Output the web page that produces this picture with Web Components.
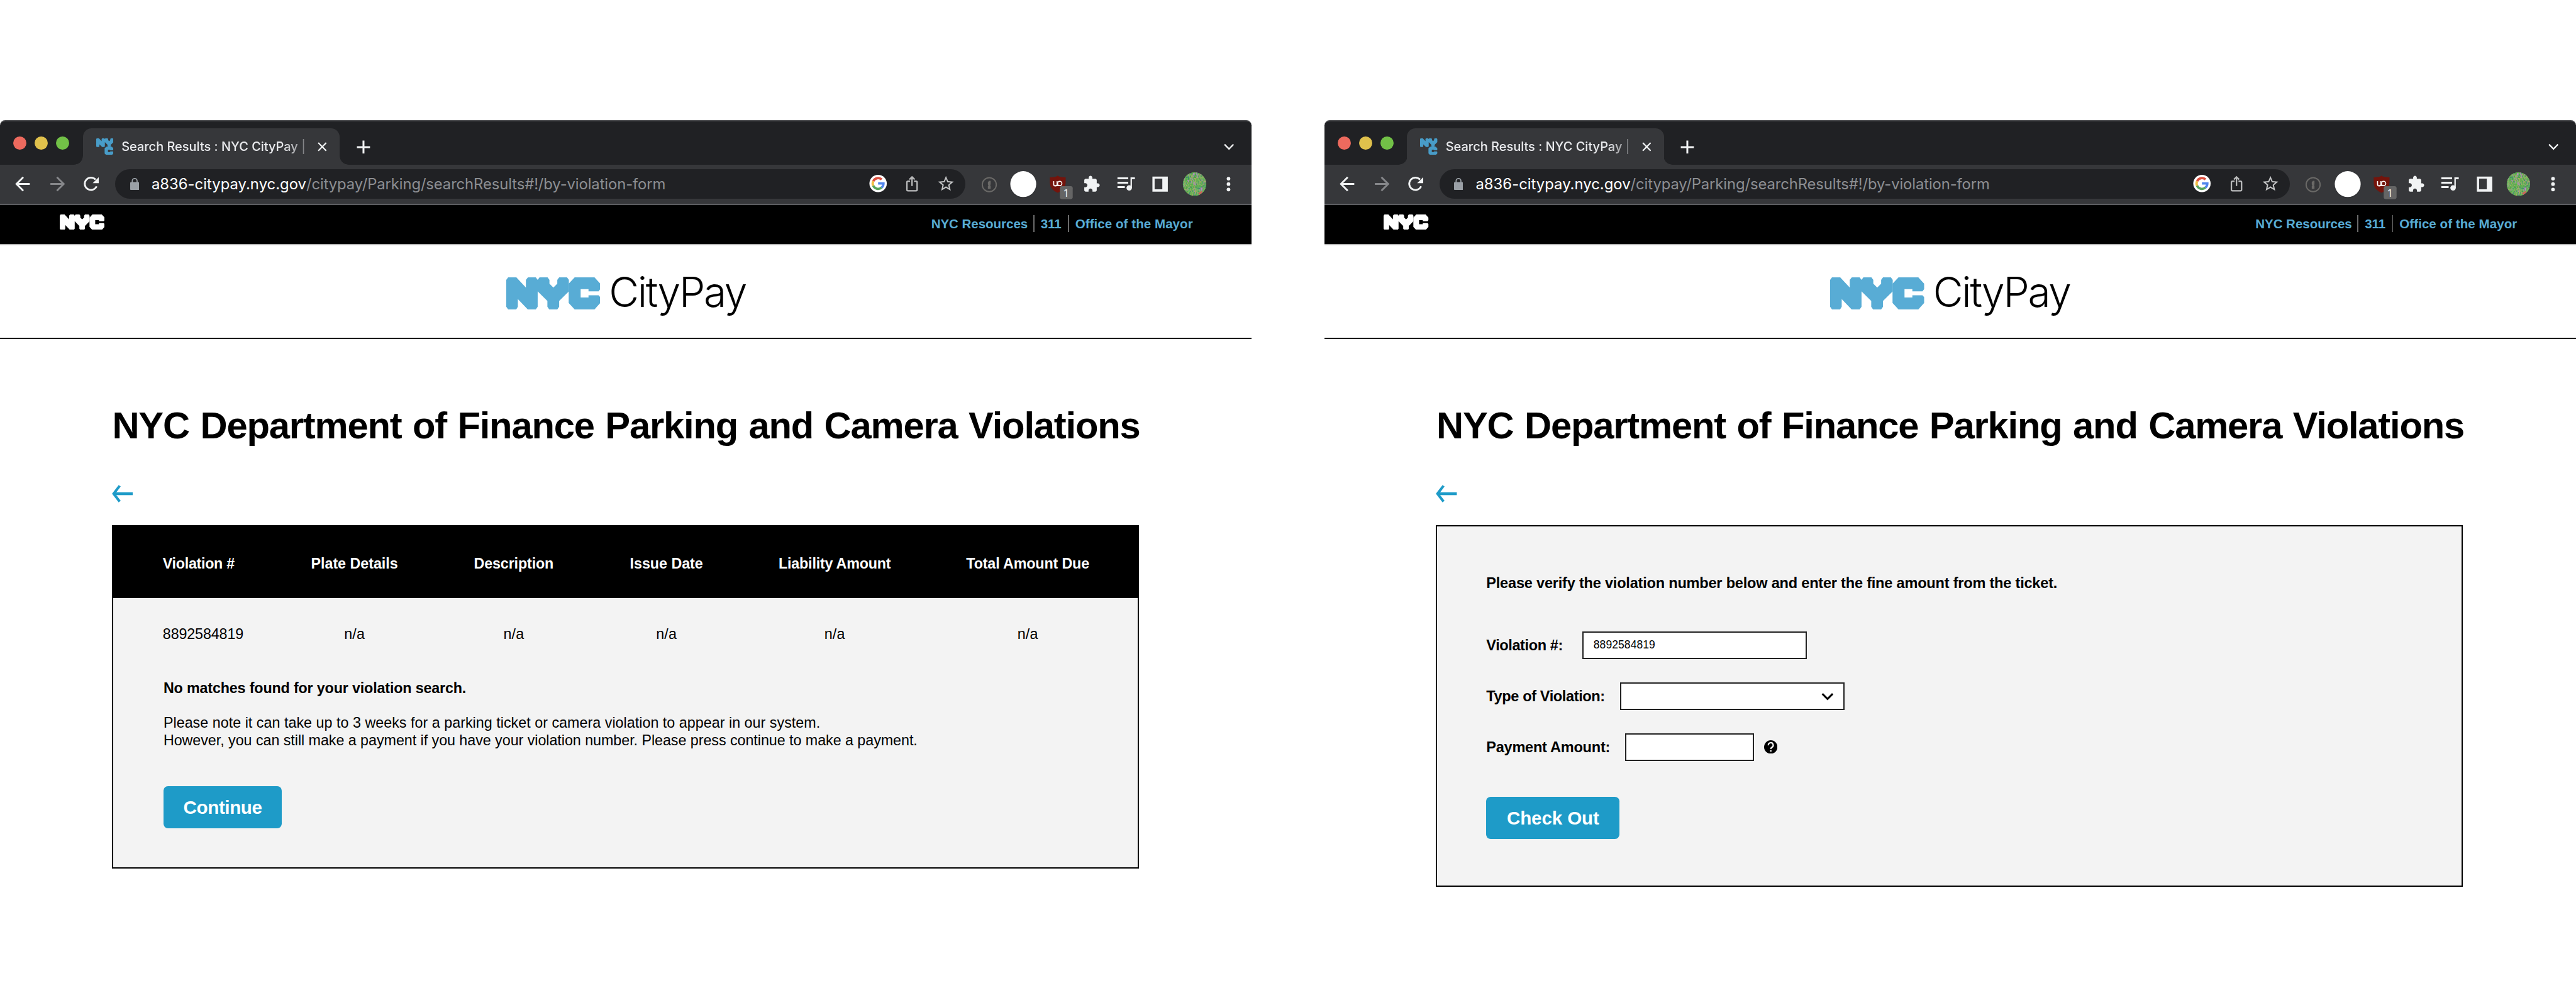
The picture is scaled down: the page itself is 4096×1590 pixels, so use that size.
<!DOCTYPE html>
<html lang="en">
<head>
<meta charset="utf-8">
<title>NYC CityPay</title>
<style>
  /* 1rem stands for 100 design units; the canvas is 74.72rem wide */
  html { font-size: calc(100vw / 74.72); }
  body { margin: 0; background: #fff; color: #000; font-family: "Liberation Sans", Arial, sans-serif; overflow: hidden; }
  citypay-board { height: 29rem; }
</style>
</head>
<body>
<citypay-board>
  <browser-window>
    <city-page heading="NYC Department of Finance Parking and Camera Violations">
      <results-panel></results-panel>
    </city-page>
  </browser-window>
  <browser-window>
    <city-page heading="NYC Department of Finance Parking and Camera Violations">
      <verify-panel></verify-panel>
    </city-page>
  </browser-window>
</citypay-board>

<script>
const NY = 'M128 155L138 133H182L233 221V155L244 133H286L296 155L306 133H349L359 155V188L380 221L401 188V155L411 133H453L463 155V255L411 338V388L401 411H358L348 388V338L296 255V388L286 411H243L190 321V388L181 411H138L128 388Z';
const C = 'M462 188L494 133H600L631 188V235L622 255H568V235H526V308H568V288H622L631 305V355L600 411H494L462 355Z';

function component(name, render) {
  customElements.define(name, class extends HTMLElement {
    connectedCallback() {
      if (this.shadowRoot) return;
      this.attachShadow({ mode: 'open' }).innerHTML = render(this);
    }
  });
}

function speckles() {
  const colors = ['#4f9a4a', '#7fbf5a', '#3f8f7a', '#9fb06a', '#5fc463', '#c9a86a', '#2f7f6f', '#8fae7a', '#57b04c', '#b98ac0', '#74b84e', '#6aa858'];
  let seed = 11, out = '';
  const rnd = () => (seed = (seed * 16807) % 2147483647) / 2147483647;
  for (let y = 22; y < 90; y += 4)
    for (let x = 14; x < 84; x += 3)
      out += `<rect x="${x}" y="${y + rnd() * 2}" width="3" height="${3 + rnd() * 3}" fill="${colors[Math.floor(rnd() * colors.length)]}" opacity=".7"/>`;
  return out;
}

const ICONS = {
  back: '<path d="M70 55.7H32M51 36L31.5 55.7L51 75.4" fill="none" stroke="#f1f3f4" stroke-width="5.4"/>',
  forward: '<path d="M29.4 55.7H67M48.4 36L68 55.7L48.4 75.4" fill="none" stroke="#86878a" stroke-width="5.4"/>',
  reload: '<path d="M65 62.5A18 18 0 1 1 62 43" fill="none" stroke="#f1f3f4" stroke-width="5.2"/><path d="M71.2 36V53.2H53.6Z" fill="#f1f3f4"/>',
  google: '<circle cx="49.7" cy="56" r="25.2" fill="#fff"/><g fill="none" stroke-width="7"><path d="M60.2 44.3A15.7 15.7 0 0 0 35.5 49.4" stroke="#dc5140"/><path d="M35.5 49.4A15.7 15.7 0 0 0 35.5 62.6" stroke="#f2bd42"/><path d="M35.5 62.6A15.7 15.7 0 0 0 59.8 68" stroke="#58a55c"/><path d="M59.8 68A15.7 15.7 0 0 0 65.2 56H49.7" stroke="#5186ec"/></g>',
  share: '<path d="M44 49.5H38Q34.8 49.5 34.8 52.5V74.3Q34.8 77.2 38 77.2H61.2Q64.3 77.2 64.3 74.3V52.5Q64.3 49.5 61.2 49.5H55.3M49.6 63.5V37.5M42 44.5L49.6 37L57.2 44.5" fill="none" stroke="#b9babb" stroke-width="4.2"/>',
  star: '<path transform="translate(22.4 29.7) scale(2.26)" fill="#c4c5c6" d="M22 9.24l-7.19-.62L12 2 9.19 8.63 2 9.24l5.46 4.73L5.82 21 12 17.27 18.18 21l-1.63-7.03L22 9.24zM12 15.4l-3.76 2.27 1-4.28-3.32-2.88 4.38-.38L12 6.1l1.71 4.04 4.38.38-3.32 2.88 1 4.28L12 15.4z"/>',
  key: '<circle cx="49.3" cy="57.7" r="20.3" fill="none" stroke="#6a6967" stroke-width="3.6"/><path d="M45.3 50L49 46.5H53.2V57L51.5 59L53.2 61V70H45.3V62L47 60L45.3 57Z" fill="#6a6967"/>',
  blank: '<circle cx="49.3" cy="58.5" r="38.5" fill="#2a2b2e" opacity=".55"/><circle cx="49.3" cy="56" r="37.6" fill="#fff"/>',
  shield: '<path d="M48.9 31.3Q54 36 72 36.6V52Q72 72 48.9 81Q26.2 72 26.2 52V36.6Q44 36 48.9 31.3Z" fill="#74140c"/><path d="M37.3 47.5V56.5A4.9 4.9 0 0 0 47.1 56.5V47.5M52.3 60.5H42" fill="none" stroke="#fff" stroke-width="3"/><circle cx="54.8" cy="54.2" r="6.3" fill="none" stroke="#fff" stroke-width="3"/><rect x="55.2" y="62" width="37.3" height="37.7" rx="6" fill="#656565"/><text x="72.5" y="92.8" font-family="Inter, sans-serif" font-size="29" text-anchor="middle" fill="#f1f1f1">1</text>',
  puzzle: '<path transform="translate(23.2 29.9) scale(2.13 2.18)" fill="#f1f3f4" d="M20.5 11H19V7c0-1.1-.9-2-2-2h-4V3.5C13 2.12 11.88 1 10.5 1S8 2.12 8 3.5V5H4c-1.1 0-1.99.9-1.99 2v3.8H3.5c1.49 0 2.7 1.21 2.7 2.7s-1.21 2.7-2.7 2.7H2V20c0 1.1.9 2 2 2h3.8v-1.5c0-1.49 1.21-2.7 2.7-2.7 1.49 0 2.7 1.21 2.7 2.7V22H17c1.1 0 2-.9 2-2v-4h1.5c1.38 0 2.5-1.12 2.5-2.5S21.88 11 20.5 11z"/>',
  playlist: '<path d="M23.4 39.4H54.7M23.4 52H54.7M23.4 64.6H44.7" stroke="#f1f3f4" stroke-width="5.4"/><path d="M61.3 67V36.7H74V42H65.4V67Z" fill="#f1f3f4"/><circle cx="57.5" cy="67" r="7.9" fill="#f1f3f4"/>',
  panel: '<path fill-rule="evenodd" d="M26.3 34.3H71V78H26.3ZM32.7 40.3V71.3H55V40.3Z" fill="#f1f3f4"/>',
  avatar: '<clipPath id="c"><circle cx="48.3" cy="56" r="34"/></clipPath><g clip-path="url(#c)"><path d="M10 20H90V92H10Z" fill="#66ad57"/>' + speckles() + '<path d="M66 66h5v9h-4zM44 24h4v6h-4z" fill="#b983c9"/><path d="M59 82l10-6 2 4-8 8z" fill="#d0605a"/></g>',
  dots: '<g fill="#f1f3f4"><circle cx="48.2" cy="40.3" r="5.3"/><circle cx="48.2" cy="56" r="5.3"/><circle cx="48.2" cy="71.7" r="5.3"/></g>'
};

component('tool-icon', el => `
  <style>:host{display:block;flex:none;width:.994rem;height:1.12rem}svg{display:block;width:100%;height:100%}</style>
  <svg viewBox="0 0 99.4 112" preserveAspectRatio="none">${ICONS[el.getAttribute('name')]}</svg>`);

component('nyc-logo', el => `
  <style>:host{display:block;flex:none}svg{display:block;width:100%;height:100%;fill:currentColor}</style>
  ${el.hasAttribute('stacked')
    ? `<svg viewBox="0 0 150 146" preserveAspectRatio="none"><path transform="scale(.4478 .2734) translate(-128 -133)" d="${NY}"/><path transform="translate(73 72) scale(.4556 .2662) translate(-462 -133)" d="${C}"/></svg>`
    : `<svg viewBox="128 133 503 278" preserveAspectRatio="none"><path d="${NY}"/><path d="${C}"/></svg>`}`);

component('citypay-board', () => `
  <style>:host{display:flex;justify-content:space-between;align-items:flex-start;box-sizing:border-box;padding-top:3.48rem}</style>
  <slot></slot>`);

component('browser-window', () => `
  <style>
    :host{display:block;width:36.31rem;flex:none}
    .tabs{height:1.3rem;box-sizing:border-box;background:#202124;border-top:.037rem solid #4b4c4f;border-radius:.15rem .15rem 0 0;display:flex;align-items:flex-end;font-family:Inter,sans-serif}
    .lights{display:flex;gap:.24rem;padding-left:.387rem;align-self:flex-start;margin-top:.445rem}
    .lights i{width:.38rem;height:.38rem;border-radius:50%}
    .foot{width:.25rem;height:.25rem;flex:none;background:radial-gradient(circle at 0 0,#202124 .245rem,#36373a .255rem)}
    .foot.r{background:radial-gradient(circle at 100% 0,#202124 .245rem,#36373a .255rem)}
    .foot.l{margin-left:.147rem}
    .tab{width:7.45rem;height:1.06rem;box-sizing:border-box;background:#36373a;border-radius:.25rem .25rem 0 0;display:flex;align-items:center;padding:.02rem .37rem 0 .38rem}
    nyc-logo{width:.5rem;height:.486rem;color:#489cc8;margin-bottom:.02rem}
    .title{display:flex;margin-left:.24rem;font-size:.365rem;font-weight:500;line-height:.6rem;color:#e9eaed;white-space:pre;-webkit-mask:linear-gradient(90deg,#000 4.7rem,rgba(0,0,0,.42) 5.3rem)}
    .bar{margin-left:.1rem;width:.14rem;font-weight:400}
    .x{margin-left:auto;width:.27rem;height:.27rem}
    .plus{width:.4rem;height:.4rem;margin:0 0 .32rem .235rem}
    .down{width:.3rem;height:.2rem;margin:0 .51rem .42rem auto}
    svg{display:block;fill:none;stroke:#f1f3f4}
    .tool{height:1.16rem;box-sizing:border-box;background:#36373a;border-bottom:.037rem solid #5d5e61;display:flex;padding:0 .163rem 0 .173rem}
    .omni{flex:1;display:flex;align-items:center;height:.86rem;margin:.13rem .19rem 0 .185rem;border-radius:.43rem;background:#202124;padding:0 .06rem 0 .43rem;font:.435rem/.86rem Inter,sans-serif}
    .lock{width:.26rem;height:.35rem}
    .host{color:#fff;margin-left:.365rem}
    .path{color:#8c8e92;margin-right:auto}
    .omni tool-icon{margin-top:-.02rem}
  </style>
  <div class="tabs">
    <div class="lights"><i style="background:#ed6a5e"></i><i style="background:#e0c14c"></i><i style="background:#72c147"></i></div>
    <div class="foot l"></div>
    <div class="tab">
      <nyc-logo stacked></nyc-logo>
      <div class="title"><fit-text w="512">Search Results : NYC CityPay</fit-text><span class="bar">|</span></div>
      <svg class="x" viewBox="0 0 27 27" stroke-width="4"><path d="M2 2L25 25M25 2L2 25"/></svg>
    </div>
    <div class="foot r"></div>
    <svg class="plus" viewBox="0 0 40 40" stroke-width="5.5"><path d="M20 1V39M1 20H39"/></svg>
    <svg class="down" viewBox="0 0 30 20" stroke-width="4.2"><path d="M2 3L15 16L28 3"/></svg>
  </div>
  <div class="tool">
    <tool-icon name="back"></tool-icon><tool-icon name="forward"></tool-icon><tool-icon name="reload"></tool-icon>
    <div class="omni">
      <svg class="lock" viewBox="0 0 26 35" stroke="none"><rect y="12" width="26" height="23" rx="2.5" style="fill:#9aa0a6;stroke:none"/><path d="M6 13V8.5A7 7 0 0 1 20 8.5V13" style="stroke:#9aa0a6;stroke-width:3.2"/></svg>
      <fit-text class="host" w="449">a836-citypay.nyc.gov</fit-text><fit-text class="path" w="1042">/citypay/Parking/searchResults#!/by-violation-form</fit-text>
      <tool-icon name="google"></tool-icon><tool-icon name="share"></tool-icon><tool-icon name="star"></tool-icon>
    </div>
    <tool-icon name="key"></tool-icon><tool-icon name="blank"></tool-icon><tool-icon name="shield"></tool-icon><tool-icon name="puzzle"></tool-icon><tool-icon name="playlist"></tool-icon><tool-icon name="panel"></tool-icon><tool-icon name="avatar"></tool-icon><tool-icon name="dots"></tool-icon>
  </div>
  <slot></slot>`);

component('city-page', el => `
  <style>
    :host{display:block}
    .top{height:1.17rem;box-sizing:border-box;background:#000;border-bottom:.037rem solid #b4b4b4;display:flex;align-items:center;justify-content:space-between;padding:0 1.71rem 0 1.73rem}
    .top nyc-logo{width:1.3rem;height:.45rem;color:#fff;margin-bottom:.13rem}
    .links{display:flex;align-items:center;color:#58acd5;font-weight:700;font-size:.375rem;line-height:.5rem;margin-bottom:.05rem}
    .links i{width:.03rem;height:.5rem;background:#6b6b6b;margin:0 .185rem 0 .19rem}
    .links i.first{margin-left:.16rem}
    .brand{height:2.72rem;box-sizing:border-box;border-bottom:.037rem solid #1a1a1a;display:flex;justify-content:center;align-items:center;gap:.26rem}
    .brand nyc-logo{width:2.727rem;height:.93rem;color:#58acd5;margin-top:.11rem}
    .name{font:300 1.2rem/1.4rem Inter,"Liberation Sans",sans-serif;margin-top:.04rem}
    main{padding:1.92rem 3.28rem 0 3.245rem}
    h1{margin:0;font-size:1.09rem;line-height:1.2rem;font-weight:700;padding-left:.01rem;word-spacing:.035em}
    .back{display:block;width:.61rem;height:.51rem;margin:1.12rem 0 .66rem;fill:none;stroke:#1e9bc8}
  </style>
  <div class="top">
    <nyc-logo></nyc-logo>
    <nav class="links"><fit-text w="280">NYC Resources</fit-text><i class="first"></i><fit-text w="60">311</fit-text><i></i><fit-text w="341">Office of the Mayor</fit-text></nav>
  </div>
  <div class="brand"><nyc-logo></nyc-logo><fit-text class="name" w="397">CityPay</fit-text></div>
  <main>
    <h1><fit-text w="2981">${el.getAttribute('heading')}</fit-text></h1>
    <svg class="back" viewBox="0 0 61 51"><path d="M61 25.5H6" stroke-width="8.5"/><path d="M22.5 2.5L5 25.5L22.5 48.5" stroke-width="7.5"/></svg>
    <slot></slot>
  </main>`);

component('city-button', () => `
  <style>:host{display:inline-flex;align-items:center;justify-content:center;box-sizing:border-box;height:1.22rem;border-radius:.13rem;background:#1e9bc8;color:#fff;font-weight:700;font-size:.54rem;line-height:.7rem;padding-top:.02rem}</style>
  <slot></slot>`);

const HEAD = [['Violation #', 208], ['Plate Details', 252], ['Description', 231], ['Issue Date', 212], ['Liability Amount', 325], ['Total Amount Due', 357]];

component('results-panel', () => `
  <style>
    :host{display:block;box-sizing:border-box;height:9.95rem;border:.037rem solid #000;background:#f3f3f3;font-size:.425rem;line-height:.6rem}
    .row{display:grid;grid-template-columns:4.06rem 3rem 6.24rem 2.62rem 7.14rem 4.06rem;justify-items:center;align-items:center;padding-left:1.44rem}
    .row>:first-child{justify-self:start}
    .head{height:2.07rem;background:#000;color:#fff;font-weight:700;padding-top:.08rem;box-sizing:border-box}
    .data{padding-top:.76rem}
    .body{padding-left:1.46rem;display:flex;flex-direction:column;align-items:flex-start}
    b{margin-top:.96rem}
    p{margin:.465rem 0 1.06rem;line-height:.504rem;display:flex;flex-direction:column;align-items:flex-start}
    city-button{width:3.435rem}
  </style>
  <div class="row head">${HEAD.map(([t, w]) => `<fit-text w="${w}">${t}</fit-text>`).join('')}</div>
  <div class="row data"><fit-text w="234">8892584819</fit-text>${'<fit-text w="60">n/a</fit-text>'.repeat(5)}</div>
  <div class="body">
    <b><fit-text w="878">No matches found for your violation search.</fit-text></b>
    <p><fit-text w="1905">Please note it can take up to 3 weeks for a parking ticket or camera violation to appear in our system.</fit-text><fit-text w="2187">However, you can still make a payment if you have your violation number. Please press continue to make a payment.</fit-text></p>
    <city-button><fit-text w="228">Continue</fit-text></city-button>
  </div>`);

component('verify-panel', () => `
  <style>
    :host{display:flex;flex-direction:column;align-items:flex-start;box-sizing:border-box;height:10.49rem;border:.037rem solid #000;background:#f3f3f3;font-size:.43rem;line-height:.6rem;padding:1.35rem 0 0 1.42rem;font-weight:700}
    .lead{margin-bottom:1.09rem}
    .row{display:flex;align-items:center;margin-bottom:.675rem}
    .row>fit-text{margin-top:.03rem}
    .box{box-sizing:border-box;width:6.52rem;height:.8rem;border:.037rem solid #222;background:#fff;font-weight:400;font-size:.32rem;display:flex;align-items:center;padding-left:.29rem}
    .small{width:3.74rem}
    .chev{width:.36rem;height:.24rem;margin:.02rem .28rem 0 auto;fill:none;stroke:#000}
    .help{width:.39rem;height:.39rem;margin-left:.29rem}
    city-button{width:3.87rem;margin-top:.37rem}
  </style>
  <div class="lead"><fit-text w="1656">Please verify the violation number below and enter the fine amount from the ticket.</fit-text></div>
  <div class="row"><fit-text w="222">Violation #:</fit-text><div class="box" style="margin-left:.565rem"><fit-text w="179">8892584819</fit-text></div></div>
  <div class="row"><fit-text w="344">Type of Violation:</fit-text><div class="box" style="margin-left:.435rem"><svg class="chev" viewBox="0 0 36 24" stroke-width="5.6"><path d="M3 4L18 19L33 4"/></svg></div></div>
  <div class="row"><fit-text w="359">Payment Amount:</fit-text><div class="box small" style="margin-left:.44rem"></div>
    <svg class="help" viewBox="0 0 39 39"><circle cx="19.5" cy="19.5" r="19.5"/><path d="M12.5 15A7 7 0 1 1 22.5 20.5Q19.5 22 19.5 25.5" fill="none" stroke="#f3f3f3" stroke-width="4"/><circle cx="19.5" cy="31" r="2.5" fill="#f3f3f3"/></svg></div>
  <city-button><fit-text w="268">Check Out</fit-text></city-button>`);

/* Single-line text tracked so that its advance equals w design units */
customElements.define('fit-text', class extends HTMLElement {
  connectedCallback() {
    if (this.shadowRoot) return;
    this.attachShadow({ mode: 'open' }).innerHTML = '<style>:host{display:inline-block;white-space:nowrap;flex:none;font-kerning:normal}</style><slot></slot>';
    const unit = parseFloat(getComputedStyle(document.documentElement).fontSize) / 100;
    const target = this.getAttribute('w') * unit;
    const natural = this.getBoundingClientRect().width;
    this.style.letterSpacing = ((target - natural) / this.textContent.length).toFixed(3) + 'px';
  }
});
</script>
</body>
</html>
